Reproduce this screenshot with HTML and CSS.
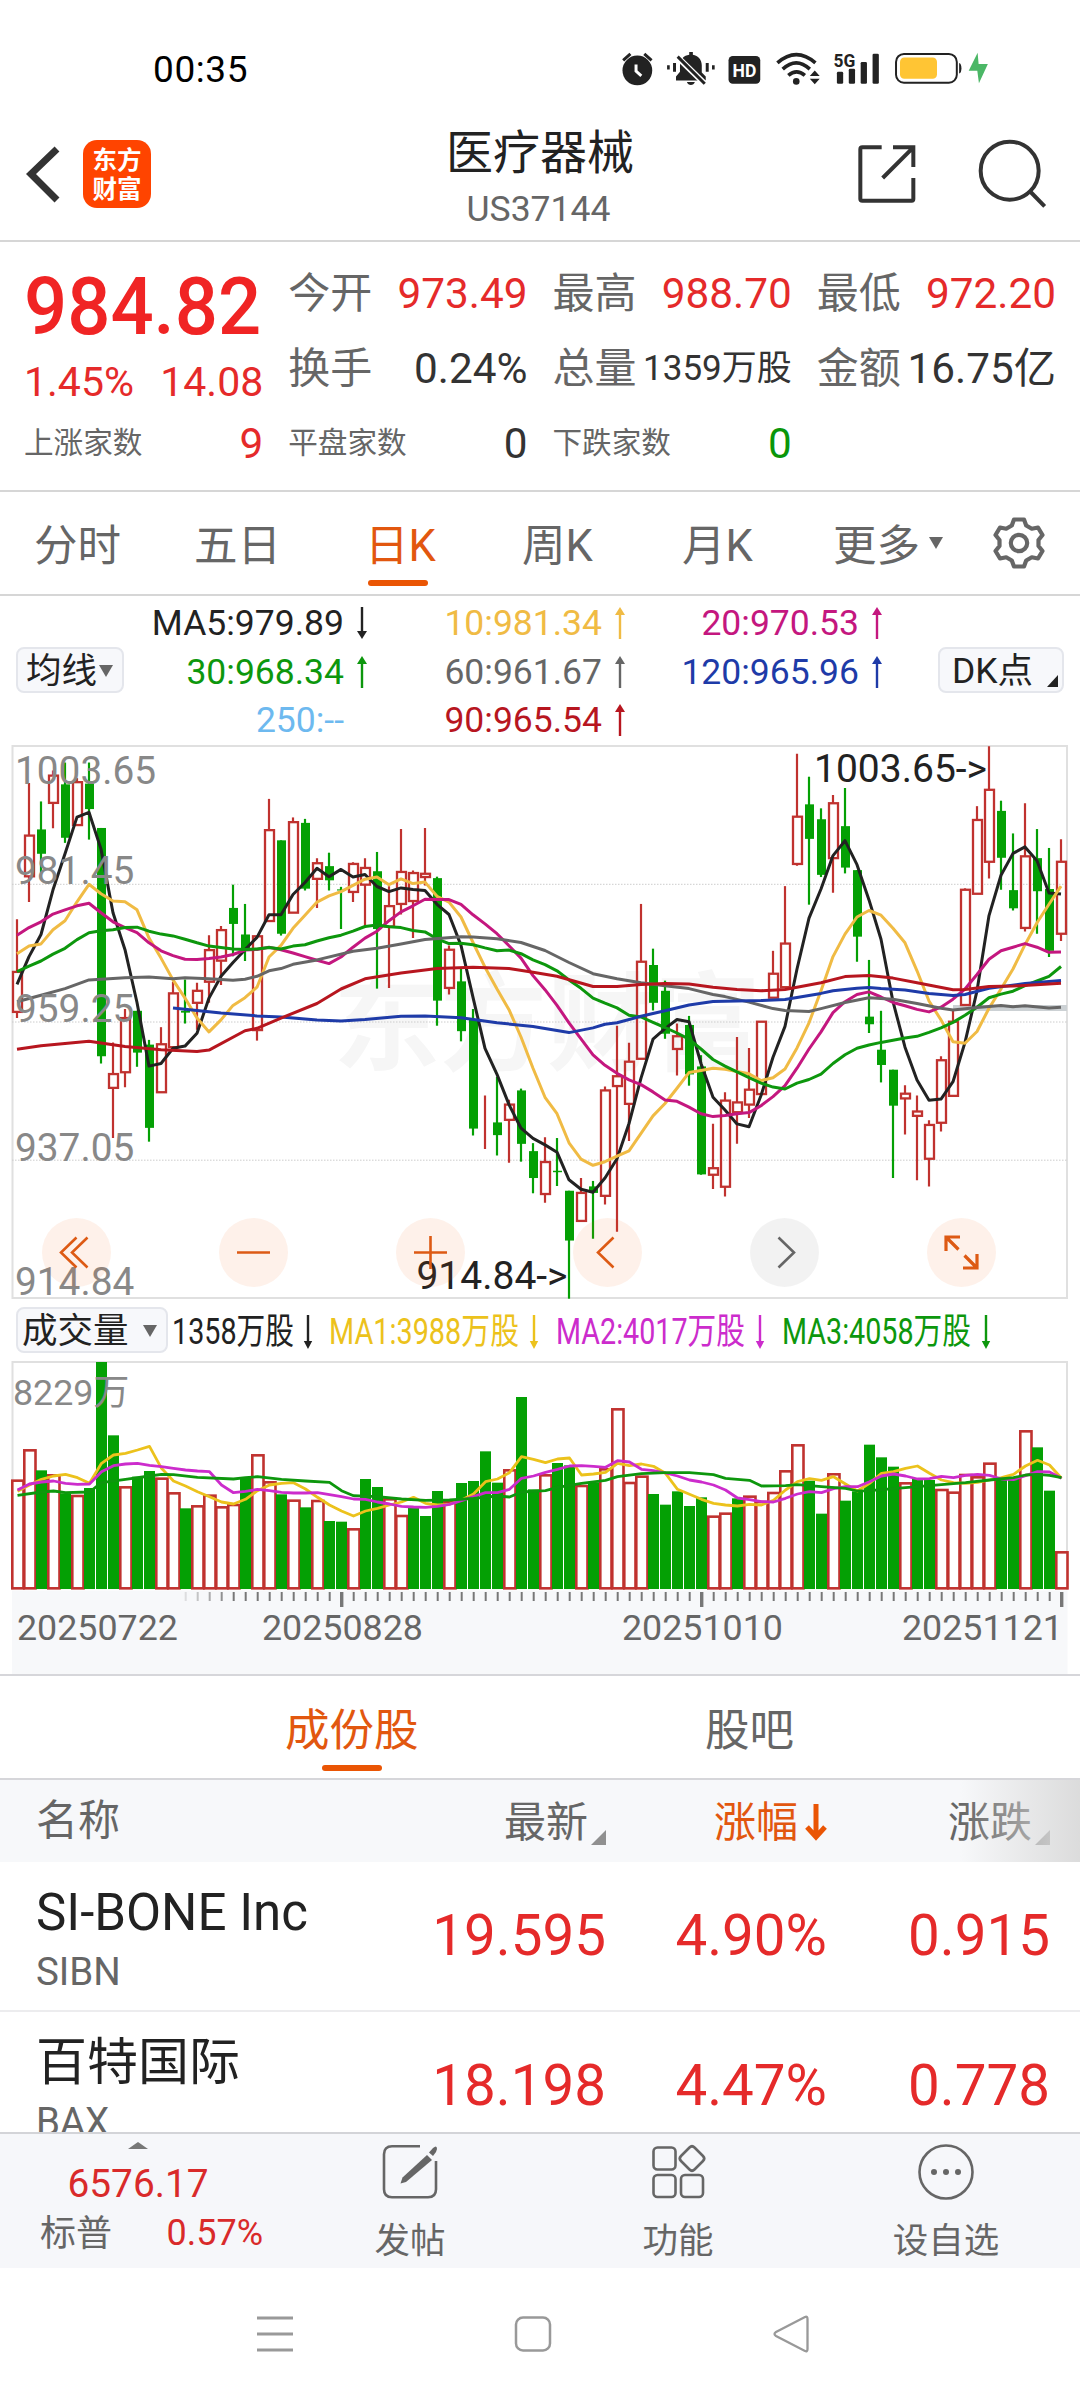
FILE: index.html
```html
<!DOCTYPE html>
<html lang="zh-CN">
<head>
<meta charset="utf-8">
<title>医疗器械 US37144</title>
<link rel="stylesheet" href="styles.css">
</head>
<body>
<div class="status">
  <span class="clock">00:35</span>
  <svg class="status-icons" viewBox="120 60 1120 112">
    <g fill="#222">
      <circle cx="168" cy="122" r="45"/>
      <path d="M122 88l22-20 6 7-22 20zM214 88l-22-20-6 7 22 20z"/>
      <path d="M164 104v20l16 14" fill="none" stroke="#fff" stroke-width="9"/>
      <path d="M285 152v-12l12-14v-20c0-18 12-30 28-32v-8h11v8c16 3 27 15 27 32v22l12 12v12zM318 157h24c-3 12-21 12-24 0z"/>
      <path d="M284 76l90 88" stroke="#fff" stroke-width="18"/>
      <path d="M290 80l82 82" stroke="#222" stroke-width="9"/>
      <path d="M258 106h8v13h-8zM276 99h9v27h-9zM375 99h9v27h-9zM394 106h8v13h-8z"/>
      <rect x="444" y="78" width="96" height="84" rx="13"/>
      <circle cx="649" cy="155" r="10"/>
      <path d="M592 99q57-50 115 0M608 118q41-38 82 0M625 137q25-22 50 0" fill="none" stroke="#222" stroke-width="11"/>
      <path d="M690 139l15-17 15 17zM690 147h30l-15 17z"/>
      <rect x="772" y="126" width="19" height="36" rx="4"/><rect x="808" y="117" width="19" height="45" rx="4"/><rect x="844" y="96" width="19" height="66" rx="4"/><rect x="880" y="71" width="19" height="91" rx="4"/>
      <path d="M1142 99q7 2 7 16t-7 16z"/>
    </g>
    <text x="492" y="142" class="hd" textLength="72" lengthAdjust="spacingAndGlyphs">HD</text>
    <text x="762" y="110" class="fiveg" textLength="66" lengthAdjust="spacingAndGlyphs">5G</text>
    <rect x="951" y="72" width="184" height="87" rx="24" fill="none" stroke="#222" stroke-width="6"/>
    <rect x="963" y="83" width="112" height="64" rx="13" fill="#ffc534"/>
    <path d="M1198 68l-27 55h26l5 38 27-59h-28z" fill="#4bb766"/>
  </svg>
</div>

<header class="header">
  <div class="header-left">
    <svg class="back" viewBox="0 0 34 60"><path d="M31 5L5 30l26 26" fill="none" stroke="#333" stroke-width="7"/></svg>
    <div class="logo"><span>东方</span><span>财富</span></div>
  </div>
  <div class="header-title"><h1>医疗器械</h1><p>US37144</p></div>
  <div class="header-right">
    <svg class="share" viewBox="830 343 180 180"><g fill="none" stroke="#333" stroke-width="12"><path d="M904 353h-58q-6 0-6 6v149q0 5 6 5h148q5 0 5-5v-63M938 353h61v59M999 353l-92 92"/></g></svg>
    <svg class="search" viewBox="1190 325 210 210"><g fill="none" stroke="#333" stroke-width="12"><circle cx="1288" cy="423" r="87"/><path d="M1348 484l45 46"/></g></svg>
  </div>
</header>

<section class="quote">
  <div class="quote-col first">
    <div class="price"><span>984.82</span></div>
    <div class="row change"><b class="red">1.45%</b><b class="red">14.08</b></div>
    <div class="row small"><span>上涨家数</span><b class="red">9</b></div>
  </div>
  <div class="quote-col">
    <div class="row"><span>今开</span><b class="red">973.49</b></div>
    <div class="row"><span>换手</span><b>0.24%</b></div>
    <div class="row small"><span>平盘家数</span><b>0</b></div>
  </div>
  <div class="quote-col">
    <div class="row"><span>最高</span><b class="red">988.70</b></div>
    <div class="row"><span>总量</span><b class="tight">1359万股</b></div>
    <div class="row small"><span>下跌家数</span><b class="green">0</b></div>
  </div>
  <div class="quote-col">
    <div class="row"><span>最低</span><b class="red">972.20</b></div>
    <div class="row"><span>金额</span><b>16.75亿</b></div>
  </div>
</section>

<nav class="periods">
  <span>分时</span><span>五日</span><span class="active">日K</span><span>周K</span><span>月K</span><span>更多<i class="tri"></i></span>
  <svg class="gear" viewBox="-27 -27 54 54"><g fill="none" stroke="#666" stroke-width="4.2" stroke-linejoin="round"><path d="M-5 -23.5H5L7.2 -17.5L12.8 -14.3L19 -15.5L23.5 -8L19.5 -3V3L23.5 8L19 15.5L12.8 14.3L7.2 17.5L5 23.5H-5L-7.2 17.5L-12.8 14.3L-19 15.5L-23.5 8L-19.5 3V-3L-23.5 -8L-19 -15.5L-12.8 -14.3L-7.2 -17.5Z"/><circle r="8.2"/></g></svg>
</nav>

<section class="averages">
  <div class="chip">均线<i class="tri"></i></div>
  <div class="ma-grid">
    <span class="c-black">MA5:979.89<svg class="arr" viewBox="0 0 10 32"><path d="M5 0v25" stroke="currentColor" stroke-width="2.4"/><path d="M0 24h10l-5 8z" fill="currentColor"/></svg></span>
    <span class="c-gold">10:981.34<svg class="arr up" viewBox="0 0 10 32"><path d="M5 0v25" stroke="currentColor" stroke-width="2.4"/><path d="M0 24h10l-5 8z" fill="currentColor"/></svg></span>
    <span class="c-pink">20:970.53<svg class="arr up" viewBox="0 0 10 32"><path d="M5 0v25" stroke="currentColor" stroke-width="2.4"/><path d="M0 24h10l-5 8z" fill="currentColor"/></svg></span>
    <span class="c-green">30:968.34<svg class="arr up" viewBox="0 0 10 32"><path d="M5 0v25" stroke="currentColor" stroke-width="2.4"/><path d="M0 24h10l-5 8z" fill="currentColor"/></svg></span>
    <span class="c-gray">60:961.67<svg class="arr up" viewBox="0 0 10 32"><path d="M5 0v25" stroke="currentColor" stroke-width="2.4"/><path d="M0 24h10l-5 8z" fill="currentColor"/></svg></span>
    <span class="c-blue">120:965.96<svg class="arr up" viewBox="0 0 10 32"><path d="M5 0v25" stroke="currentColor" stroke-width="2.4"/><path d="M0 24h10l-5 8z" fill="currentColor"/></svg></span>
    <span class="c-sky">250:--<svg class="arr" viewBox="0 0 10 32"></svg></span>
    <span class="c-red">90:965.54<svg class="arr up" viewBox="0 0 10 32"><path d="M5 0v25" stroke="currentColor" stroke-width="2.4"/><path d="M0 24h10l-5 8z" fill="currentColor"/></svg></span>
  </div>
  <div class="chip dk">DK点<i class="corner"></i></div>
</section>

<svg id="kline" class="kline" viewBox="0 0 1080 564"></svg>

<div class="vol-legend">
  <div class="chip vol">成交量<i class="tri"></i></div>
  <svg class="vol-values" viewBox="168 0 912 52">
    <g id="vol-texts"></g>
  </svg>
</div>
<svg id="volume" class="volume" viewBox="0 0 1080 318"></svg>

<nav class="subtabs"><span class="active">成份股</span><span>股吧</span></nav>

<section class="list">
  <div class="list-row head">
    <span class="name">名称</span>
    <span>最新<i class="corner"></i></span>
    <span class="sorted">涨幅<svg viewBox="0 0 22 36"><path d="M11 0v33M2 23l9 10 9-10" fill="none" stroke="#ea5504" stroke-width="5"/></svg></span>
    <span>涨跌<i class="corner"></i></span>
  </div>
  <div class="list-row">
    <div class="name"><strong>SI-BONE Inc</strong><em>SIBN</em></div>
    <span>19.595</span><span>4.90%</span><span>0.915</span>
  </div>
  <div class="list-row">
    <div class="name"><strong class="zh">百特国际</strong><em>BAX</em></div>
    <span>18.198</span><span>4.47%</span><span>0.778</span>
  </div>
</section>

<footer class="bottom">
  <div class="index">
    <i class="up-tri"></i>
    <b>6576.17</b>
    <p><span>标普</span><em>0.57%</em></p>
  </div>
  <div class="tool">
    <svg viewBox="0 0 56 56"><g fill="none" stroke="#666" stroke-width="2.6"><path d="M38 2.3H10q-8 0-8 8v35q0 8 8 8h36q8 0 8-8V17"/></g><path d="M45 11l5 5-26 22-5.500 1.500 2-6z" fill="#666"/><path d="M47 8.500l4-4.500q4-3.500 4 1l-1 3-3 4z" fill="#666"/></svg>
    <span>发帖</span>
  </div>
  <div class="tool">
    <svg viewBox="0 0 56 56"><g fill="none" stroke="#666" stroke-width="2.6"><rect x="3.500" y="3.500" width="22" height="22" rx="4"/><rect x="3.500" y="31" width="22" height="22" rx="4"/><rect x="31" y="31" width="22" height="22" rx="4"/><path d="M39.500 3.500q2.500-2.500 5 0l8.500 8.500q2.500 2.500 0 5l-8.500 8.500q-2.500 2.500-5 0l-8.500-8.500q-2.500-2.500 0-5z"/></g></svg>
    <span>功能</span>
  </div>
  <div class="tool">
    <svg viewBox="0 0 56 56"><circle cx="28" cy="28" r="26.500" fill="none" stroke="#666" stroke-width="2.6"/><g fill="#666"><circle cx="16" cy="28" r="3"/><circle cx="28" cy="28" r="3"/><circle cx="40" cy="28" r="3"/></g></svg>
    <span>设自选</span>
  </div>
</footer>

<div class="sysnav">
  <svg viewBox="0 0 40 40"><path d="M2 4h36M2 20h36M2 36h36" stroke="#999" stroke-width="3"/></svg>
  <svg viewBox="0 0 40 40"><rect x="3" y="3.500" width="34" height="33" rx="7" fill="none" stroke="#999" stroke-width="2.500"/></svg>
  <svg viewBox="0 0 40 40"><path d="M34 3L5 18q-3 2 0 4l29 15q2.500 1 2.500-2V5q0-3-2.500-2z" fill="none" stroke="#999" stroke-width="2.300"/></svg>
</div>
<script src="chart.js"></script>
</body>
</html>
```

FILE: styles.css
```css
* { box-sizing: border-box; margin: 0; padding: 0; }
body {
  width: 1080px; height: 2400px; overflow: hidden; background: #fff; color: #333;
  font-family: Roboto, "Noto Sans CJK SC", sans-serif; font-size: 42px;
}
i, em { font-style: normal; }
b { font-weight: 400; }
svg { display: block; flex: none; overflow: visible; }
.red { color: #e52a2a; }
.green { color: #0a960a; }

.status { height: 90px; display: flex; justify-content: space-between; padding: 50px 86px 0 153px; }
.clock { font-size: 37px; line-height: 39px; color: #000; letter-spacing: .6px; }
.status-icons { width: 373px; height: 37px; margin-right: 1px; }
.hd { font: 700 54px Roboto, sans-serif; fill: #fff; text-anchor: middle; }
.fiveg { font: 700 56px Roboto, sans-serif; fill: #222; }

.header { height: 152px; border-bottom: 2px solid #d6d6d6; display: grid; grid-template-columns: 1fr 1fr 1fr; }
.header-left { display: flex; padding: 50px 0 0 26px; }
.back { width: 34px; height: 60px; margin-top: 4px; }
.logo {
  width: 68px; height: 68px; margin-left: 23px; border-radius: 14px; background: #ff4400; color: #fff;
  font-family: "Noto Sans CJK SC", sans-serif; font-size: 24.500px; font-weight: 700; line-height: 29px; padding-top: 4px;
  display: flex; flex-direction: column; align-items: center;
}
.header-title { text-align: center; padding-top: 35px; }
.header-title h1 { font-size: 47px; font-weight: 400; line-height: 56px; color: #222; }
.header-title p { font-size: 35.500px; line-height: 40px; color: #666; margin-top: 8px; padding-right: 3px; }
.header-right { display: flex; justify-content: flex-end; gap: 60px; padding: 48px 33px 0 0; }
.share { width: 60px; height: 60px; margin-top: 6px; }
.search { width: 70px; height: 70px; }

.quote { height: 250px; border-bottom: 2px solid #d6d6d6; padding: 14px 24px 0 24px; display: grid; grid-template-columns: repeat(4, minmax(0, 1fr)); column-gap: 25px; }
.row { height: 75px; line-height: 75px; display: flex; justify-content: space-between; white-space: nowrap; }
.row b { font-size: 42.300px; }
.row span { color: #666; }
.row .tight { font-size: 35px; }
.small span { font-size: 29.600px; }
.price { height: 103px; line-height: 102px; font-size: 80px; font-weight: 500; color: #f02424; }
.price span { display: inline-block; transform: scaleX(.95); transform-origin: 0 50%; }
.row.change { height: 47px; line-height: 46px; }
.row.change b { font-size: 41px; }

.periods { height: 104px; border-bottom: 2px solid #d6d6d6; display: flex; padding-left: 34px; font-size: 43.500px; line-height: 110px; color: #666; }
.periods span { position: relative; white-space: nowrap; height: 102px; }
.periods span:nth-child(1) { width: 160px; }
.periods span:nth-child(2) { width: 171px; }
.periods span:nth-child(3) { width: 157px; }
.periods span:nth-child(4) { width: 160px; }
.periods span:nth-child(5) { width: 151px; }
.periods span:nth-child(6) { width: 159px; display: flex; gap: 9px; }
.periods .tri { margin-top: 45px; }
.active { color: #e2570f; }
.periods .active::after, .subtabs .active::after { content: ""; position: absolute; left: 3px; bottom: 8px; width: 60px; height: 6px; border-radius: 3px; background: #ea5504; }
.tri { height: 0; border: 7.500px solid transparent; border-top: 12px solid #666; border-bottom: 0; }
.gear { width: 54px; height: 54px; margin-top: 24px; }

.averages { height: 144px; display: flex; padding: 14px 16px 0; position: relative; }
.chip {
  height: 46px; width: 108px; margin-top: 37px; border: 2px solid #e4e6ec; border-radius: 8px; background: #f7f8fb; color: #222;
  font-size: 35.500px; line-height: 42px; padding: 2px 0 0 8px; display: flex; align-items: center; gap: 2px; white-space: nowrap;
}
.chip.dk { width: 126px; margin-left: auto; padding-left: 12px; position: relative; }
.corner { height: 0; border-left: 11px solid transparent; border-bottom: 12px solid #222; }
.dk .corner { position: absolute; right: 4px; bottom: 4px; }
.ma-grid { display: grid; grid-template-columns: 243px 258px 257px; grid-auto-rows: 48.500px; margin-top: -11px; line-height: 50px; font-size: 35.500px; }
.ma-grid span { display: flex; justify-content: flex-end; align-items: center; }
.arr { width: 10px; height: 32px; margin-left: 13px; }
.up { transform: scaleY(-1); }
.c-black { color: #222; } .c-gold { color: #f0bb44; } .c-pink { color: #c4177f; } .c-green { color: #0d970d; }
.c-gray { color: #666; } .c-blue { color: #1e3ba8; } .c-sky { color: #6db9ef; } .c-red { color: #b7161f; }

.kline { width: 1080px; height: 564px; }
.vol-legend { height: 52px; display: flex; padding-left: 16px; }
.chip.vol { width: 152px; margin-top: 3px; padding-left: 4px; gap: 14px; }
.vol-values { width: 912px; height: 52px; }
.volume { width: 1080px; height: 318px; }

.subtabs { height: 106px; border-top: 2px solid #d6d6da; border-bottom: 2px solid #d6d6da; display: flex; padding-left: 285px; font-size: 44.500px; line-height: 110px; color: #666; }
.subtabs span { position: relative; flex: none; height: 102px; }
.subtabs .active { width: 420px; }
.subtabs .active::after { left: 37px; bottom: 7px; }

.list { height: 352px; overflow: hidden; }
.list-row { height: 150px; border-bottom: 2px solid #ececee; display: grid; grid-template-columns: 371px 235px 221px 223px; padding-left: 0; }
.list-row > span { text-align: right; color: #e52a2a; font-size: 56.500px; line-height: 148px; }
.list-row .name { padding-left: 36px; text-align: left; }
.list-row strong { display: block; font-weight: 400; font-size: 51px; line-height: 60px; color: #222; margin-top: 21px; white-space: nowrap; }
.list-row em { display: block; font-size: 38.500px; line-height: 46px; color: #666; margin-top: 6px; }
.list-row.head { height: 82px; border-bottom: 0; background: #f7f8fa; position: relative; }
.list-row.head > span { font-size: 42px; line-height: 86px; color: #666; display: flex; justify-content: flex-end; }
.list-row.head > .name { justify-content: flex-start; line-height: 81px; }
.head .corner { border-left-width: 15px; border-bottom: 15px solid #909090; align-self: flex-end; margin: 0 0 21px 3px; }
.list-row.head > .sorted { color: #e2570f; }
.sorted svg { width: 22px; height: 36px; margin: 24px 0 0 7px; }
.head::after { content: ""; position: absolute; right: 0; top: 0; width: 120px; height: 82px; background: linear-gradient(90deg, rgba(247,248,250,0), rgba(218,218,218,.95)); }

.bottom { height: 136px; border-top: 2px solid #d3d4d8; background: #f6f7fa; display: grid; grid-template-columns: 276px 268px 268px 268px; color: #666; }
.index { display: flex; flex-direction: column; align-items: center; color: #d92a2a; }
.up-tri { border: 10.500px solid transparent; border-bottom: 7px solid #777; border-top: 0; margin-top: 8px; }
.index b { font-size: 38.800px; line-height: 46px; margin-top: 12px; }
.index p { width: 100%; display: flex; justify-content: space-between; padding: 0 13px 0 40px; font-size: 36px; line-height: 46px; margin-top: 2px; }
.index p span { color: #666; margin-top: 2px; }
.index p em { margin-top: 1px; }
.tool { display: flex; flex-direction: column; align-items: center; }
.tool svg { width: 56px; height: 56px; margin-top: 10px; }
.tool span { font-size: 35.500px; line-height: 46px; margin-top: 18px; }

.sysnav { height: 132px; display: flex; padding: 46px 0 0 255px; gap: 218px; }
.sysnav svg { width: 40px; height: 40px; }

.axis { font: 38.800px Roboto, sans-serif; fill: #888; }
.mark { font: 39px Roboto, sans-serif; fill: #222; text-anchor: end; }
.date { font: 35.800px Roboto, sans-serif; fill: #666; }
.volmax { font: 35.800px Roboto, "Noto Sans CJK SC", sans-serif; fill: #888; }
.legend { font: 36px Roboto, "Noto Sans CJK SC", sans-serif; }
.watermark { font: 700 107px "Noto Sans CJK SC", sans-serif; fill: #f6f6f6; }
```

FILE: chart.js
```js
const RED = '#c0322f', GREEN = '#04a004';
const xAt = i => 17 + 12 * i;

// Each candle: direction, high, body top, body bottom, low (levels counted down from the top edge)
const candles = `r 493 638 748 765|r 118 263 375 446|g 169 246 313 365|r 84 98 173 243|g 62 122 269 283|r 105 116 234 234|g 62 120 190 274|g 242 242 870 890|r 832 919 957 1095|r 740 765 914 955|g 745 745 860 899|g 825 838 1067 1105|r 790 837 969 969|r 665 697 845 845|g 659 745 750 780|r 668 690 723 797|r 537 578 665 723|r 512 523 607 674|g 398 462 506 595|g 451 535 576 608|r 540 540 798 827|r 162 248 498 498|g 276 276 533 538|r 213 226 475 475|g 217 228 409 414|r 325 339 382 462|g 310 347 386 414|g 404 411 414 520|r 336 341 418 446|r 325 352 398 517|g 308 361 520 684|r 402 457 513 682|r 245 363 451 480|r 359 366 443 545|r 242 368 377 400|g 376 380 717 786|r 565 577 682 700|g 628 664 801 829|g 740 770 1069 1088|r 978 1072 1072 1125|g 927 1052 1087 1143|r 990 1003 1045 1163|g 959 964 1111 1160|g 1109 1131 1205 1247|r 1093 1161 1249 1273|g 1095 1185 1189 1227|g 1240 1240 1377 1537|r 1205 1246 1323 1323|g 1213 1228 1246 1372|r 953 964 1254 1278|r 786 925 952 1353|r 833 885 1001 1103|r 451 610 877 877|g 574 619 723 744|g 662 690 808 822|r 780 815 850 923|g 759 784 920 951|g 867 898 1195 1196|r 1056 1178 1196 1235|r 969 992 1229 1256|r 817 997 1024 1111|r 847 962 1003 1040|r 775 775 974 974|r 580 643 709 709|r 402 560 680 680|r 38 211 341 346|g 101 177 272 453|g 188 218 371 377|r 151 174 325 420|g 132 237 351 367|g 358 358 541 610|g 605 761 782 806|g 745 852 894 942|g 907 907 1006 1205|r 950 973 986 1085|r 978 1022 1034 1211|r 1046 1059 1152 1228|r 870 881 1053 1077|r 745 775 979 979|r 408 412 729 729|r 182 220 423 423|r 17 137 335 381|g 167 195 324 412|g 257 413 463 469|r 174 320 517 527|g 245 325 416 533|g 297 410 580 597|r 273 335 533 553`
  .split('|').map(s => s.split(' '));

const averages = {
  '#f0bb44': [588,567,561,522,497,445,397,423,443,445,467,545,600,660,710,765,803,770,730,709,680,597,565,518,482,446,429,417,400,383,377,398,382,395,391,430,446,487,557,625,685,742,817,903,983,1028,1108,1153,1170,1160,1145,1130,1082,1034,1000,958,915,909,903,906,912,918,937,929,905,847,778,690,596,534,487,469,482,518,558,635,718,770,830,834,802,738,685,630,563,503,452,402],
  '#222': [672,596,535,412,313,212,199,300,475,577,722,897,890,848,842,807,710,650,612,577,543,481,481,425,392,353,376,356,377,370,403,417,407,411,414,452,480,565,708,848,920,1003,1068,1096,1114,1134,1210,1236,1244,1205,1152,1055,930,823,794,769,775,890,983,1018,1056,1064,978,873,788,630,490,410,318,277,343,440,548,720,845,935,991,988,940,832,690,483,372,312,294,332,421,424],
  '#c4177f': [537,516,500,479,467,456,449,475,500,516,530,558,580,593,603,604,601,597,590,578,576,570,577,586,596,606,615,597,570,545,526,497,473,456,438,439,439,452,481,506,533,566,600,648,687,730,778,822,866,895,917,935,948,968,990,994,1010,1028,1036,1033,1028,1025,1006,981,951,903,850,803,750,720,700,693,707,722,731,741,748,735,713,685,645,603,580,570,560,570,584,583],
  '#0d970d': [637,622,608,589,573,549,530,525,522,516,515,526,534,539,548,558,567,571,575,576,575,571,575,567,563,553,544,537,526,513,509,514,516,524,528,547,560,559,563,572,580,578,588,605,618,635,660,683,710,724,737,757,762,777,791,806,823,850,879,897,913,929,944,955,960,944,934,919,890,866,848,839,832,826,820,815,804,792,777,757,735,709,699,691,676,663,650,623]
};
// Slow averages: index:level at the points where the slope changes
const slow = {
  '#666': '0:720 2:702 4:684 6:660 9:654 11:652 13:657 14:654 16:657 18:661 19:658 20:650 21:635 22:629 23:617 25:605 28:581 30:573 32:561 34:549 37:541 38:542 40:547 42:557 44:579 46:612 48:643 50:657 52:668 54:676 56:684 58:700 59:706 61:721 63:739 64:744 66:747 67:739 69:722 71:709 73:713 75:725 77:738 78:743 80:736 82:730 83:734 84:731 86:737 87:735',
  '#1e3ba8': '13:737 15:744 17:751 20:759 22:762 25:770 27:773 29:769 32:760 34:759 37:764 40:778 43:788 46:805 48:792 49:782 50:778 52:760 54:745 56:729 58:719 60:718 62:717 64:714 65:708 67:697 68:690 70:683 71:681 72:684 74:688 76:697 78:703 79:700 81:683 84:670 87:662',
  '#b7161f': '0:851 2:841 6:829 9:843 12:852 15:857 16:853 19:800 20:793 22:765 25:725 27:685 29:657 32:641 35:629 38:625 41:629 43:639 45:650 48:678 50:678 52:673 54:670 56:671 58:680 60:686 62:690 64:686 67:668 69:651 71:648 73:655 75:668 78:687 79:686 81:678 83:677 87:669'
};

const line = (pts, color, w) => `<polyline points="${pts.map(p => p.map(n => n.toFixed(1)).join()).join(' ')}" fill="none" stroke="${color}" stroke-width="${w}" stroke-linejoin="round"/>`;
const sparse = s => s.split(' ').map(p => p.split(':').map(Number));

const yP = v => v / 2.751;
let k = '<text x="333" y="322" class="watermark">东方财富</text>';
k += '<rect x="12.500" y="6" width="1054.500" height="552" fill="none" stroke="#e0e0e0" stroke-width="2"/>';
for (const y of [144.3, 282, 420.2]) k += `<path d="M12 ${y}H1067" stroke="#ccc" stroke-width="1" stroke-dasharray="1.500 1.500"/>`;
k += '<rect x="953" y="265" width="114" height="6" fill="#ccd1d4"/>';
candles.forEach(([d, ...v], i) => {
  const [h, t, b, l] = v.map(n => yP(+n)), x = xAt(i);
  if (d === 'g') {
    k += `<path d="M${x} ${h}V${l}" stroke="${GREEN}" stroke-width="2.200"/><rect x="${x - 4}" y="${t}" width="9" height="${b - t}" fill="${GREEN}"/>`;
  } else {
    k += `<path d="M${x} ${h}V${t}M${x} ${b}V${l}" stroke="${RED}" stroke-width="2.200"/><rect x="${x - 4}" y="${t}" width="9" height="${b - t}" fill="none" stroke="${RED}" stroke-width="2.300"/>`;
  }
});
const dense = (color) => line(averages[color].map((v, i) => [xAt(i), yP(v)]), color, 3);
const slowLine = (color) => line(sparse(slow[color]).map(([i, v]) => [xAt(i), yP(v)]), color, 3);
k += dense('#222') + dense('#f0bb44') + dense('#c4177f') + dense('#0d970d') + slowLine('#666') + slowLine('#1e3ba8') + slowLine('#b7161f');
[['1003.65', 43.8], ['981.45', 143.8], ['959.25', 281.8], ['937.05', 420.8], ['914.84', 554.8]]
  .forEach(([t, y]) => k += `<text x="15" y="${y}" class="axis">${t}</text>`);
k += '<text x="987" y="41.800" class="mark">1003.65-&gt;</text><text x="567.500" y="549.300" class="mark">914.84-&gt;</text>';
[76.5, 253.5, 430.5, 607.5, 784.5, 961.5].forEach((cx, i) => {
  k += `<circle cx="${cx}" cy="512.500" r="34.500" fill="${i === 4 ? 'rgba(0,0,0,.05)' : 'rgba(240,90,10,.085)'}"/>`;
});
k += `<g fill="none" stroke="#dd5a14" stroke-width="2.600">
<path d="M76.500 497.500l-15.500 15 15.500 15M87.500 497.500l-15.500 15 15.500 15"/>
<path d="M237 512.500h33M414 512.500h33M430.500 496v33M613.500 497.500l-15.500 15 15.500 15"/>
<path d="M778.500 497.500l15.500 15-15.500 15" stroke="#666"/>
<path d="M946 511v-14h14M947 498l11.500 11.500M964.500 515.500l11.500 11.500M977 514v14h-14" stroke-width="3.200"/></g>`;
document.getElementById('kline').innerHTML = k;

const bars = 'r572 r481 g541 r556 g610 r618 g594 g216 g436 r592 g560 g543 r566 r610 g655 r649 r617 r652 r645 g562 r496 r577 g613 r632 g652 r633 g693 g695 r718 g567 g591 r628 r678 g652 g678 g603 r636 g579 g573 g484 g578 r541 g321 g598 r556 g519 g526 r588 g577 r538 r358 r579 r560 g612 g644 g604 g648 g622 r680 r671 g625 r620 r636 r609 r544 r466 g572 g671 r553 g632 g604 g464 g502 g530 r580 g567 g570 r600 r608 r555 r562 r521 g563 g566 r424 g472 g602 r787'.split(' ');
const volAvg = {
  '#ecc21c': [604,585,568,558,553,563,580,520,495,490,480,469,535,573,588,605,620,636,642,628,602,585,580,578,597,622,645,663,678,663,655,645,636,622,640,645,643,630,612,575,567,548,500,508,518,507,504,555,552,547,520,527,522,529,550,598,613,628,640,645,648,643,645,631,600,575,566,571,560,582,603,580,550,545,535,528,550,570,578,580,577,570,563,553,528,511,525,565],
  '#cc2ccc': [600,582,576,573,580,583,582,545,527,522,520,526,530,535,540,543,545,585,608,604,598,602,607,609,609,608,614,620,627,628,636,642,649,651,652,649,643,632,620,608,608,598,565,558,547,538,528,527,529,532,512,516,538,542,549,558,570,576,585,600,624,629,635,636,625,612,605,608,596,590,590,575,558,552,558,567,566,559,563,556,553,556,567,569,557,545,546,565]
};
const volSlow = '0:616 2:606 3:603 4:608 6:606 7:578 9:568 11:558 12:553 13:554 15:562 18:567 19:563 20:560 22:568 24:573 26:577 27:602 28:617 30:620 32:627 34:631 36:630 38:625 40:618 41:621 42:606 44:602 45:592 47:580 49:571 50:560 52:551 54:548 56:548 58:554 59:565 61:571 62:588 64:587 65:584 67:590 69:595 70:603 71:602 73:596 75:590 77:584 79:578 81:570 83:563 84:555 85:553 86:556 87:563';
const yV = v => v / 3 - 66, base = yV(895);
let s = '<path d="M12.500 234V6H1067V234" fill="none" stroke="#e0e0e0" stroke-width="2"/><rect x="12" y="234.500" width="1055.500" height="83.500" fill="#f7f8fa"/>';
bars.forEach((b, i) => {
  const y = yV(+b.slice(1)), x = xAt(i) - 5;
  s += b[0] === 'g'
    ? `<rect x="${x}" y="${y}" width="11" height="${base - y + .7}" fill="${GREEN}"/>`
    : `<rect x="${x + .3}" y="${y}" width="11.200" height="${base - y}" fill="#fff" stroke="${RED}" stroke-width="2.600"/>`;
});
for (const c in volAvg) s += line(volAvg[c].map((v, i) => [xAt(i) + .5, yV(v)]), c, 2.8);
s += line(sparse(volSlow).map(([i, v]) => [xAt(i) + .5, yV(v)]), '#0d970d', 2.8);
for (let i = 14; i < 88; i++) {
  const major = i === 27 || i === 57 || i === 87;
  s += `<path d="M${xAt(i) + .7} 236V${major ? 251 : 245}" stroke="#777" stroke-width="${major ? 3.4 : 2}" opacity="${Math.min(1, (i - 13) / 5)}"/>`;
}
s += '<text x="13" y="48.500" class="volmax">8229万</text>';
[['20250722', 17], ['20250828', 262], ['20251010', 622], ['20251121', 902]]
  .forEach(([t, x]) => s += `<text x="${x}" y="284" class="date">${t}</text>`);
document.getElementById('volume').innerHTML = s;

document.getElementById('vol-texts').innerHTML = [
  ['1358万股', 172, 122, 308, '#222'], ['MA1:3988万股', 329, 190, 534, '#ecc21c'],
  ['MA2:4017万股', 556, 189, 760, '#cc2ccc'], ['MA3:4058万股', 782, 189, 986, '#0d970d']
].map(([t, x, w, ax, c]) => `<g fill="${c}" stroke="none"><text class="legend" x="${x}" y="40" textLength="${w}" lengthAdjust="spacingAndGlyphs">${t}</text><path d="M${ax - 1.2} 11h2.400v26h3l-4.200 8-4.200-8h3z"/></g>`).join('');
```
